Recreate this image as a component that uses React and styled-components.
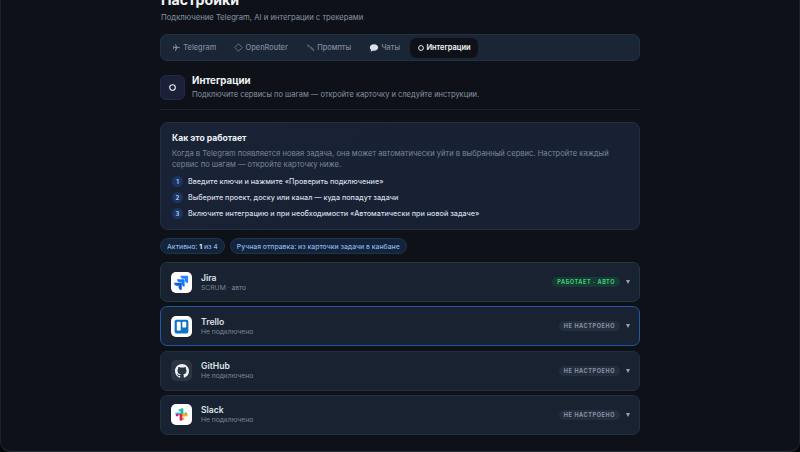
import React from "react";
import styled, { createGlobalStyle } from "styled-components";

const Global = createGlobalStyle`
  html, body { margin: 0; padding: 0; background: #050608; }
  body { font-family: Inter, "Noto Sans", "Liberation Sans", sans-serif; -webkit-font-smoothing: antialiased; }
  * { box-sizing: border-box; }
`;

const Screen = styled.div`
  width: 800px;
  height: 452px;
  overflow: hidden;
  background: #0e1218;
  border-radius: 0 0 10px 10px;
  border-bottom: 1px solid #2a2e34;
  border-left: 1px solid #1c2026;
  border-right: 1px solid #1c2026;
`;
const Content = styled.main`
  width: 480px;
  margin: -10px auto 0 159px;
  display: flex;
  flex-direction: column;
`;
const Title = styled.h1`
  margin: 0;
  padding-left: 1px;
  height: 20px;
  font-size: 14.2px;
  line-height: 20px;
  font-weight: 700;
  color: #f2f4f7;
`;
const Subtitle = styled.p`
  margin: 2px 0 0;
  padding-left: 1px;
  font-size: 7.7px;
  line-height: 12px;
  color: #8792a3;
`;
const Tabs = styled.nav`
  margin-top: 10px;
  height: 27px;
  display: flex;
  align-items: center;
  gap: 2px;
  padding: 0 3px;
  background: #1a2535;
  border: 1px solid #232f42;
  border-radius: 7px;
`;
const Tab = styled.div`
  height: 20px;
  display: flex;
  align-items: center;
  gap: 2.3px;
  padding: 0 8px;
  border-radius: 6px;
  font-size: 7.4px;
  font-weight: ${p => (p.$active ? 600 : 500)};
  color: ${p => (p.$active ? "#f4f6f9" : "#7f8b9e")};
  background: ${p => (p.$active ? "#0e1218" : "transparent")};
`;
const SectionHead = styled.header`
  margin-top: 13px;
  display: flex;
  gap: 7px;
  align-items: center;
  padding-bottom: 8px;
  border-bottom: 1px solid #1d242e;
`;
const SectionIcon = styled.div`
  width: 25px;
  height: 25px;
  display: flex;
  align-items: center;
  justify-content: center;
  background: #1a2038;
  border: 1px solid #232a48;
  border-radius: 6px;
`;
const SectionText = styled.div`
  display: flex;
  flex-direction: column;
  gap: 2px;
`;
const SectionTitle = styled.h2`
  margin: 0;
  font-size: 9.7px;
  line-height: 13px;
  font-weight: 700;
  color: #eef1f5;
`;
const SectionSub = styled.p`
  margin: 0;
  font-size: 7.5px;
  line-height: 12px;
  color: #8792a3;
`;
const HowCard = styled.section`
  margin-top: 12px;
  height: 108px;
  padding: 9px 10px 9px 11px;
  background: linear-gradient(135deg, #1a2236, #172133);
  border: 1px solid #232d44;
  border-radius: 8px;
`;
const HowTitle = styled.h3`
  margin: 0;
  font-size: 8.6px;
  line-height: 12px;
  font-weight: 700;
  color: #eef1f5;
`;
const HowText = styled.p`
  margin: 3.5px 0 0;
  font-size: 7.6px;
  line-height: 11px;
  color: #7a8699;
`;
const Steps = styled.ol`
  list-style: none;
  margin: 5.5px 0 0;
  padding: 0;
  display: flex;
  flex-direction: column;
  gap: 4px;
`;
const Step = styled.li`
  height: 12px;
  display: flex;
  align-items: center;
  gap: 5px;
  font-size: 7.23px;
  font-weight: 500;
  color: #d5dbe4;
`;
const StepNum = styled.span`
  width: 11px;
  height: 11px;
  border-radius: 50%;
  display: flex;
  align-items: center;
  justify-content: center;
  background: #1c3560;
  color: #a5c0ee;
  font-size: 6px;
  font-weight: 700;
`;
const Pills = styled.div`
  margin-top: 8px;
  display: flex;
  gap: 5px;
`;
const Pill = styled.div`
  height: 16px;
  display: flex;
  align-items: center;
  padding: 0 6px;
  font-size: 6.85px;
  font-weight: 500;
  color: #8fb4e3;
  background: #13233a;
  border: 1px solid #1d3350;
  border-radius: 8px;
  b { color: #eef1f5; font-weight: 700; white-space: pre; }
`;
const List = styled.div`
  margin-top: 8px;
  display: flex;
  flex-direction: column;
  gap: 4.3px;
`;
const Row = styled.article`
  height: 40px;
  display: flex;
  align-items: center;
  gap: 9px;
  padding: 0 9px 0 10px;
  background: #192231;
  border: 1px solid ${p => p.$border};
  border-radius: 7px;
`;
const Logo = styled.div`
  width: 21px;
  height: 21px;
  flex: none;
  display: flex;
  align-items: center;
  justify-content: center;
  border-radius: 5px;
  background: ${p => p.$bg};
`;
const RowText = styled.div`
  flex: 1;
  display: flex;
  flex-direction: column;
`;
const RowName = styled.div`
  font-size: 8.6px;
  line-height: 11px;
  font-weight: 600;
  color: #dfe4ec;
`;
const RowSub = styled.div`
  font-size: 6.75px;
  line-height: 8px;
  color: #79859a;
`;
const Badge = styled.span`
  height: 10px;
  display: flex;
  align-items: center;
  padding: 0 5px;
  border-radius: 5px;
  font-size: 5.5px;
  font-weight: 700;
  letter-spacing: 0.6px;
  color: ${p => (p.$ok ? "#3ed07a" : "#8a94a6")};
  background: ${p => (p.$ok ? "#173a34" : "#252e3e")};
`;
const Caret = styled.span`
  width: 0;
  height: 0;
  margin-left: -3px;
  border-left: 2.5px solid transparent;
  border-right: 2.5px solid transparent;
  border-top: 4px solid #98a2b1;
`;

const TgIcon = () => (
  <svg width="9" height="9" viewBox="0 0 24 24" fill="#7f8b9e"><path d="M21 12c0-1-1-1.6-2-1.6h-4.5L9.5 3H7.6l2.3 7.4H5.6L4 8.2H2.4L3.4 12l-1 3.8H4l1.6-2.2h4.3L7.6 21h1.9l5-7.4H19c1 0 2-.6 2-1.6z"/></svg>
);
const DiamondIcon = () => (
  <svg width="9" height="9" viewBox="0 0 24 24" fill="none" stroke="#7f8b9e" strokeWidth="2"><path d="M12 2l10 10-10 10L2 12z"/></svg>
);
const PencilIcon = () => (
  <svg width="9" height="9" viewBox="0 0 24 24" fill="none" stroke="#6b7688" strokeWidth="2.4"><path d="M3 7l6 3M5 4l5 5M11 12l7 7 3 1-1-3-7-7z"/></svg>
);
const ChatIcon = () => (
  <svg width="10" height="10" viewBox="0 0 24 24" fill="#d8e0ea"><path d="M12 3C6 3 2 6.6 2 11c0 2.4 1.2 4.4 3.2 5.8L4 21l5-2.5c1 .2 2 .3 3 .3 6 0 10-3.5 10-7.8S18 3 12 3z"/></svg>
);
const Ring = ({ size = 6, color = "#eef1f5" }) => (
  <svg width={size} height={size} viewBox="0 0 10 10" fill="none" stroke={color} strokeWidth="1.6"><circle cx="5" cy="5" r="4"/></svg>
);

const JiraLogo = () => (
  <svg width="15" height="15" viewBox="0 0 24 24">
    <path fill="#2684ff" d="M22.5 1H11.2c0 2.8 2.3 5.1 5.1 5.1h2.1v2c0 2.8 2.3 5.1 5.1 5.1V2c0-.6-.4-1-1-1z" transform="translate(-1 0)"/>
    <path fill="#1d78f2" d="M17 6.6H5.7c0 2.8 2.3 5.1 5.1 5.1h2.1v2c0 2.8 2.3 5.1 5.1 5.1V7.6c0-.6-.4-1-1-1z" transform="translate(-1 0)"/>
    <path fill="#0c5fdc" d="M11.4 12.2H.1c0 2.8 2.3 5.1 5.1 5.1h2.1v2c0 2.8 2.3 5.1 5.1 5.1V13.2c0-.6-.4-1-1-1z"/>
  </svg>
);
const TrelloLogo = () => (
  <svg width="15" height="15" viewBox="0 0 24 24">
    <rect x="1" y="1" width="22" height="22" rx="3" fill="#1173c4"/>
    <rect x="4.5" y="4.5" width="6.2" height="14" rx="1" fill="#fff"/>
    <rect x="13.3" y="4.5" width="6.2" height="9" rx="1" fill="#fff"/>
  </svg>
);
const GithubLogo = () => (
  <svg width="14" height="14" viewBox="0 0 16 16" fill="#eef1f5"><path d="M8 0C3.58 0 0 3.58 0 8c0 3.54 2.29 6.53 5.47 7.59.4.07.55-.17.55-.38 0-.19-.01-.82-.01-1.49-2.01.37-2.53-.49-2.69-.94-.09-.23-.48-.94-.82-1.13-.28-.15-.68-.52-.01-.53.63-.01 1.08.58 1.23.82.72 1.21 1.87.87 2.33.66.07-.52.28-.87.51-1.07-1.78-.2-3.64-.89-3.64-3.95 0-.87.31-1.59.82-2.15-.08-.2-.36-1.02.08-2.12 0 0 .67-.21 2.2.82.64-.18 1.32-.27 2-.27s1.36.09 2 .27c1.53-1.04 2.2-.82 2.2-.82.44 1.1.16 1.92.08 2.12.51.56.82 1.27.82 2.15 0 3.07-1.87 3.75-3.65 3.95.29.25.54.73.54 1.48 0 1.07-.01 1.93-.01 2.2 0 .21.15.46.55.38A8.01 8.01 0 0 0 16 8c0-4.42-3.58-8-8-8z"/></svg>
);
const SlackLogo = () => (
  <svg width="13" height="13" viewBox="0 0 24 24">
    <path fill="#36c5f0" d="M9 1.5a2.5 2.5 0 0 0 0 5h2.5V4A2.5 2.5 0 0 0 9 1.5zM9 8.5H3a2.5 2.5 0 0 0 0 5h6a2.5 2.5 0 0 0 0-5z"/>
    <path fill="#2eb67d" d="M22.5 11a2.5 2.5 0 0 0-5 0v2.5H20a2.5 2.5 0 0 0 2.5-2.5zM15.5 11V3a2.5 2.5 0 0 0-5 0v8a2.5 2.5 0 0 0 5 0z"/>
    <path fill="#ecb22e" d="M15 22.5a2.5 2.5 0 0 0 0-5h-2.5V20a2.5 2.5 0 0 0 2.5 2.5zM15 15.5h6a2.5 2.5 0 0 0 0-5h-6a2.5 2.5 0 0 0 0 5z"/>
    <path fill="#e01e5a" d="M1.5 13a2.5 2.5 0 0 0 5 0v-2.5H4A2.5 2.5 0 0 0 1.5 13zM8.5 13v8a2.5 2.5 0 0 0 5 0v-8a2.5 2.5 0 0 0-5 0z"/>
  </svg>
);

const tabs = [
  { label: "Telegram", icon: <TgIcon /> },
  { label: "OpenRouter", icon: <DiamondIcon /> },
  { label: "Промпты", icon: <PencilIcon /> },
  { label: "Чаты", icon: <ChatIcon /> },
  { label: "Интеграции", icon: <Ring />, active: true },
];
const steps = [
  "Введите ключи и нажмите «Проверить подключение»",
  "Выберите проект, доску или канал — куда попадут задачи",
  "Включите интеграцию и при необходимости «Автоматически при новой задаче»",
];
const rows = [
  { name: "Jira", sub: "SCRUM · авто", logo: <JiraLogo />, bg: "#fff", border: "#1f3a3a", badge: "РАБОТАЕТ · АВТО", ok: true },
  { name: "Trello", sub: "Не подключено", logo: <TrelloLogo />, bg: "#fff", border: "#1f56a8", badge: "НЕ НАСТРОЕНО" },
  { name: "GitHub", sub: "Не подключено", logo: <GithubLogo />, bg: "#2a3442", border: "#232e40", badge: "НЕ НАСТРОЕНО" },
  { name: "Slack", sub: "Не подключено", logo: <SlackLogo />, bg: "#fff", border: "#232e40", badge: "НЕ НАСТРОЕНО" },
];

export default function App() {
  return (
    <Screen>
      <Global />
      <Content>
        <Title>Настройки</Title>
        <Subtitle>Подключение Telegram, AI и интеграции с трекерами</Subtitle>
        <Tabs>
          {tabs.map(t => (
            <Tab key={t.label} $active={t.active}>{t.icon}{t.label}</Tab>
          ))}
        </Tabs>
        <SectionHead>
          <SectionIcon><Ring size={7} /></SectionIcon>
          <SectionText>
            <SectionTitle>Интеграции</SectionTitle>
            <SectionSub>Подключите сервисы по шагам — откройте карточку и следуйте инструкции.</SectionSub>
          </SectionText>
        </SectionHead>
        <HowCard>
          <HowTitle>Как это работает</HowTitle>
          <HowText>Когда в Telegram появляется новая задача, она может автоматически уйти в выбранный сервис. Настройте каждый сервис по шагам — откройте карточку ниже.</HowText>
          <Steps>
            {steps.map((s, i) => (
              <Step key={s}><StepNum>{i + 1}</StepNum>{s}</Step>
            ))}
          </Steps>
        </HowCard>
        <Pills>
          <Pill>Активно:&nbsp;<b>1</b>&nbsp;из 4</Pill>
          <Pill>Ручная отправка: из карточки задачи в канбане</Pill>
        </Pills>
        <List>
          {rows.map(r => (
            <Row key={r.name} $border={r.border}>
              <Logo $bg={r.bg}>{r.logo}</Logo>
              <RowText>
                <RowName>{r.name}</RowName>
                <RowSub>{r.sub}</RowSub>
              </RowText>
              <Badge $ok={r.ok}>{r.badge}</Badge>
              <Caret />
            </Row>
          ))}
        </List>
      </Content>
    </Screen>
  );
}
